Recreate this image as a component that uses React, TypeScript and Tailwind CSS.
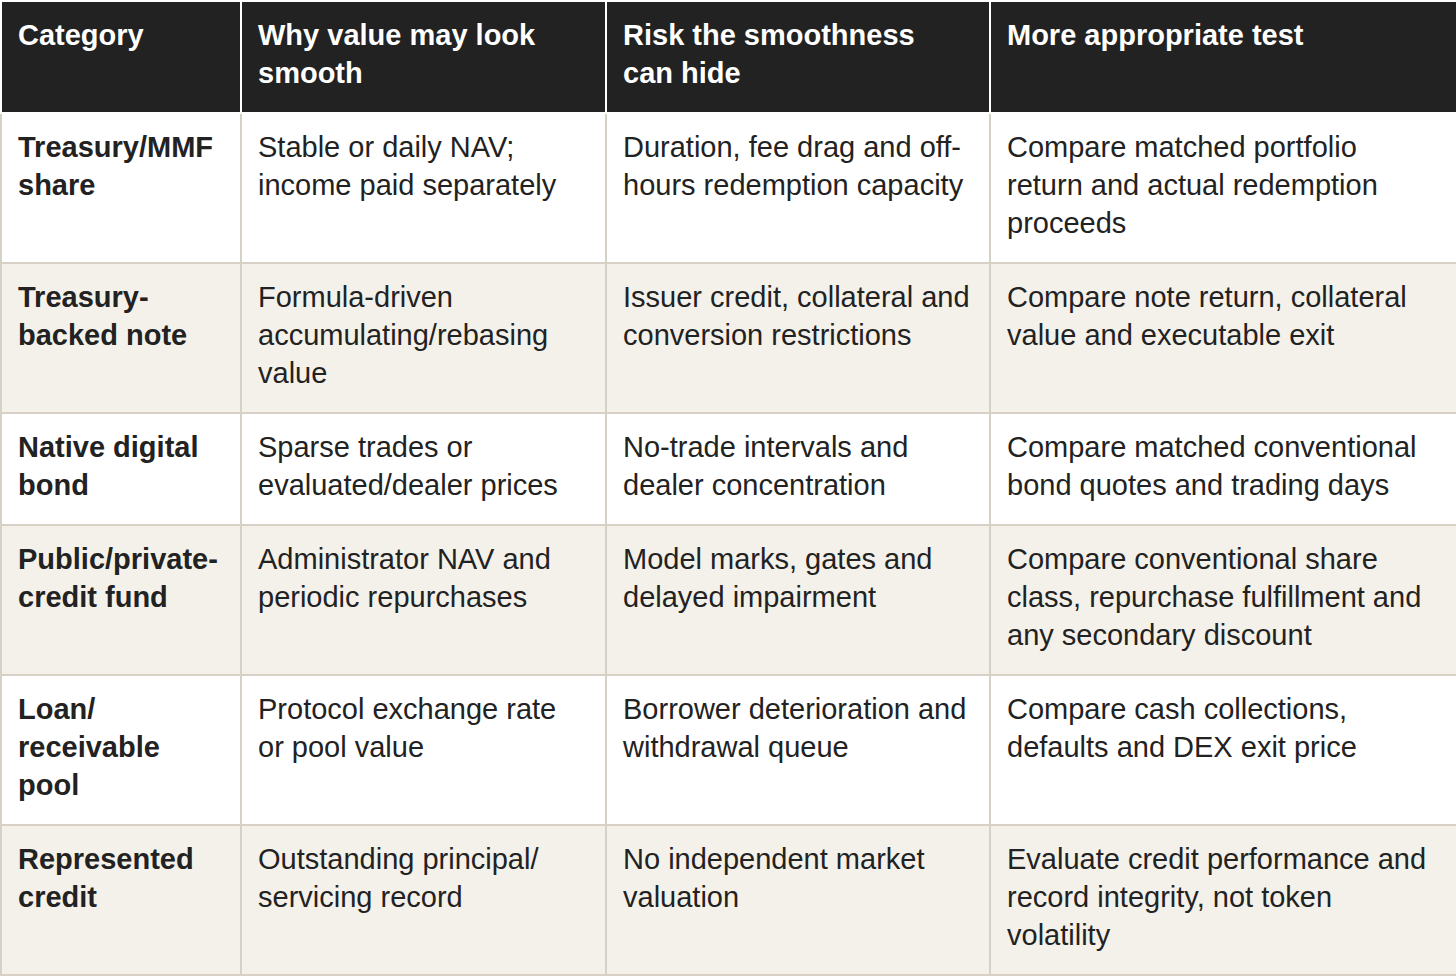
const HEADERS = [
  "Category",
  "Why value may look smooth",
  "Risk the smoothness can hide",
  "More appropriate test",
];

const ROWS = [
  [
    "Treasury/MMF share",
    "Stable or daily NAV; income paid separately",
    "Duration, fee drag and off-hours redemption capacity",
    "Compare matched portfolio return and actual redemption proceeds",
  ],
  [
    "Treasury-backed note",
    "Formula-driven accumulating/rebasing value",
    "Issuer credit, collateral and conversion restrictions",
    "Compare note return, collateral value and executable exit",
  ],
  [
    "Native digital bond",
    "Sparse trades or evaluated/dealer prices",
    "No-trade intervals and dealer concentration",
    "Compare matched conventional bond quotes and trading days",
  ],
  [
    "Public/private-credit fund",
    "Administrator NAV and periodic repurchases",
    "Model marks, gates and delayed impairment",
    "Compare conventional share class, repurchase fulfillment and any secondary discount",
  ],
  [
    "Loan/ receivable pool",
    "Protocol exchange rate or pool value",
    "Borrower deterioration and withdrawal queue",
    "Compare cash collections, defaults and DEX exit price",
  ],
  [
    "Represented credit",
    "Outstanding principal/ servicing record",
    "No independent market valuation",
    "Evaluate credit performance and record integrity, not token volatility",
  ],
];

export default function App() {
  return (
    <div className="min-h-screen bg-white font-['Liberation_Sans',Arial,sans-serif] text-[29px] leading-[38px] text-[#222]">
      <table className="w-[1456px] table-fixed border-collapse">
        <colgroup>
          <col className="w-[240px]" />
          <col className="w-[365px]" />
          <col className="w-[384px]" />
          <col className="w-[467px]" />
        </colgroup>
        <thead>
          <tr className="bg-[#222222] text-white">
            {HEADERS.map((h) => (
              <th
                key={h}
                className="h-[112px] border-[2px] border-white pl-4 pr-6 pt-[14px] pb-[20px] text-left align-top font-bold"
              >
                {h}
              </th>
            ))}
          </tr>
        </thead>
        <tbody>
          {ROWS.map((row, i) => (
            <tr key={row[0]} className={i % 2 === 0 ? "bg-white" : "bg-[#f4f1ea]"}>
              {row.map((cell, j) => (
                <td
                  key={j}
                  className={
                    "border-[2px] border-[#d6d0c5] pl-4 pr-4 pt-[14px] pb-[20px] align-top " +
                    (j === 0 ? "font-bold" : "")
                  }
                >
                  {cell}
                </td>
              ))}
            </tr>
          ))}
        </tbody>
      </table>
    </div>
  );
}
